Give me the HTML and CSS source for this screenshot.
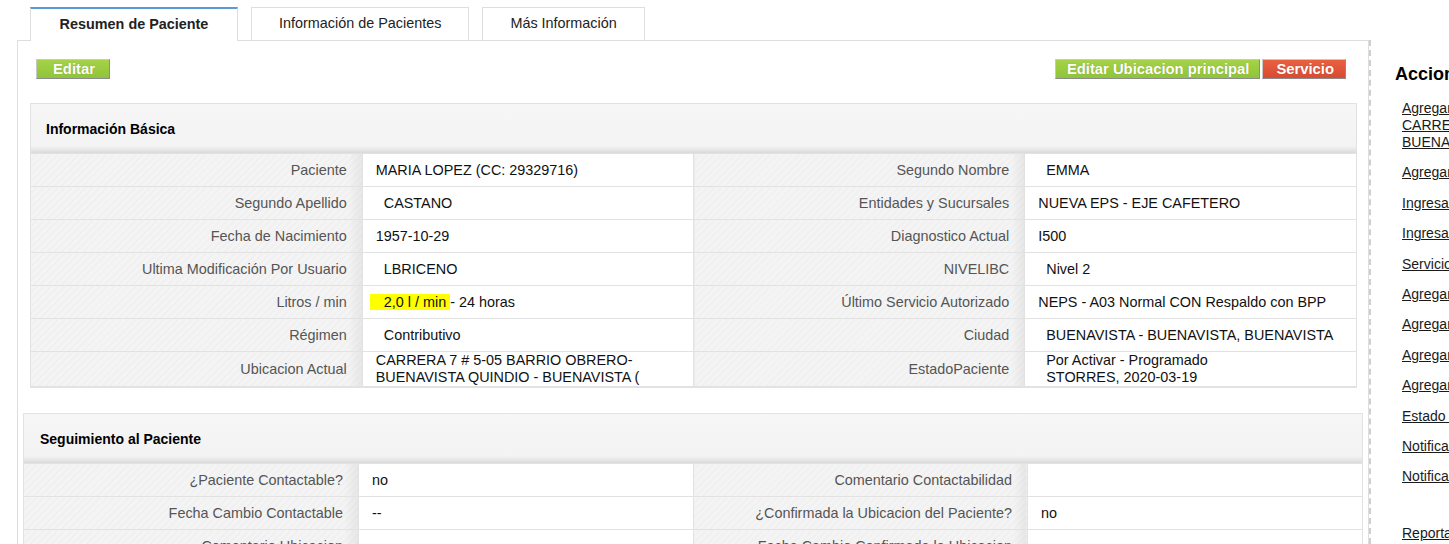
FILE: index.html
```html
<!DOCTYPE html>
<html lang="es">
<head>
    <meta charset="UTF-8">
    <title>Resumen de Paciente</title>
    <link rel="stylesheet" href="styles.css">
</head>
<body>
    <div class="layout">
        <div class="main">
            <!-- pestañas -->
            <ul class="tabs">
                <li class="tab active">Resumen de Paciente</li>
                <li class="tab">Información de Pacientes</li>
                <li class="tab">Más Información</li>
            </ul>

            <div class="panel">
                <div class="toolbar">
                    <a class="btn green">Editar</a>
                    <div class="toolbar-right">
                        <a class="btn green">Editar Ubicacion principal</a>
                        <a class="btn red">Servicio</a>
                    </div>
                </div>

                <div class="box">
                    <div class="box-head">Información Básica</div>
                    <table class="info">
                        <tr>
                            <th>Paciente</th>
                            <td>MARIA LOPEZ (CC: 29329716)</td>
                            <th>Segundo Nombre</th>
                            <td><span class="indent">EMMA</span></td>
                        </tr>
                        <tr>
                            <th>Segundo Apellido</th>
                            <td><span class="indent">CASTANO</span></td>
                            <th>Entidades y Sucursales</th>
                            <td>NUEVA EPS - EJE CAFETERO</td>
                        </tr>
                        <tr>
                            <th>Fecha de Nacimiento</th>
                            <td>1957-10-29</td>
                            <th>Diagnostico Actual</th>
                            <td>I500</td>
                        </tr>
                        <tr>
                            <th>Ultima Modificación Por Usuario</th>
                            <td><span class="indent">LBRICENO</span></td>
                            <th>NIVELIBC</th>
                            <td><span class="indent">Nivel 2</span></td>
                        </tr>
                        <tr>
                            <th>Litros / min</th>
                            <td><span class="mark">2,0 l / min </span>- 24 horas</td>
                            <th>Último Servicio Autorizado</th>
                            <td>NEPS - A03 Normal CON Respaldo con BPP</td>
                        </tr>
                        <tr>
                            <th>Régimen</th>
                            <td><span class="indent">Contributivo</span></td>
                            <th>Ciudad</th>
                            <td><span class="indent">BUENAVISTA - BUENAVISTA, BUENAVISTA</span></td>
                        </tr>
                        <tr class="tall">
                            <th>Ubicacion Actual</th>
                            <td>CARRERA 7 # 5-05 BARRIO OBRERO-<br>BUENAVISTA QUINDIO - BUENAVISTA (</td>
                            <th>EstadoPaciente</th>
                            <td><span class="indent">Por Activar - Programado<br>STORRES, 2020-03-19</span></td>
                        </tr>
                    </table>
                </div>

                <div class="box wide">
                    <div class="box-head">Seguimiento al Paciente</div>
                    <table class="info">
                        <tr>
                            <th>¿Paciente Contactable?</th>
                            <td>no</td>
                            <th>Comentario Contactabilidad</th>
                            <td></td>
                        </tr>
                        <tr>
                            <th>Fecha Cambio Contactable</th>
                            <td>--</td>
                            <th>¿Confirmada la Ubicacion del Paciente?</th>
                            <td>no</td>
                        </tr>
                        <tr>
                            <th>Comentario Ubicacion</th>
                            <td></td>
                            <th>Fecha Cambio Confirmada la Ubicacion</th>
                            <td></td>
                        </tr>
                    </table>
                </div>
            </div>
        </div>

        <div class="sidebar">
            <h3>Acciones</h3>
            <ul class="actions">
                <li><a>Agregar ubicación<br>CARRERA 7 # 5-05<br>BUENAVISTA</a></li>
                <li><a>Agregar Servicio</a></li>
                <li><a>Ingresar Novedad</a></li>
                <li><a>Ingresar Visita</a></li>
                <li><a>Servicio Técnico</a></li>
                <li><a>Agregar Llamada</a></li>
                <li><a>Agregar Comentario</a></li>
                <li><a>Agregar Documento</a></li>
                <li><a>Agregar Equipo</a></li>
                <li><a>Estado del Paciente</a></li>
                <li><a>Notificar Cambio</a></li>
                <li><a>Notificar Retiro</a></li>
                <li class="spaced"><a>Reportar Novedad</a></li>
            </ul>
        </div>
    </div>
</body>
</html>
```

FILE: styles.css
```css
* {
    margin: 0;
    padding: 0;
    box-sizing: border-box;
}

body {
    font-family: "Liberation Sans", Arial, sans-serif;
    font-size: 14.4px;
    color: #000;
    background: #fff;
    overflow: hidden;
    height: 544px;
}

.layout {
    display: flex;
    align-items: flex-start;
}

.main {
    width: 1369px;
    flex-shrink: 0;
    padding: 7px 0 0 17px;
}

/* pestañas */
.tabs {
    list-style: none;
    display: flex;
    gap: 13px;
    margin-left: 13px;
    position: relative;
    z-index: 2;
}

.tab {
    height: 33px;
    line-height: 31px;
    padding: 0 27px;
    border: 1px solid #dedede;
    border-bottom: none;
    background: #fff;
    color: #222;
}

.tab.active {
    border-top: 2px solid #5b9bd5;
    font-weight: bold;
    padding: 0;
    width: 208px;
    text-align: center;
    line-height: 31px;
    height: 34px;
    margin-bottom: -1px;
}

.panel {
    border: 1px solid #dedede;
    border-bottom: none;
    padding: 18px 11px 40px 12px;
    height: 520px;
}

.toolbar {
    display: flex;
    justify-content: space-between;
    padding: 0 11px 0 6px;
    margin-bottom: 24px;
}

.toolbar-right {
    display: flex;
    gap: 2px;
}

.btn {
    display: inline-block;
    height: 20px;
    line-height: 18px;
    padding: 0 14px 0 16px;
    color: #fff;
    font-weight: bold;
    font-size: 14.8px;
    border: 1px solid #c8c8c8;
    border-right-color: #8c8c8c;
    border-bottom-color: #8c8c8c;
    text-shadow: 0 0 1px rgba(0, 0, 0, 0.25);
}

.btn.green {
    background: linear-gradient(#a6d247, #8fc43a);
}

.toolbar-right .btn.green {
    padding: 0 10px 0 11px;
}

.btn.red {
    background: linear-gradient(#e9603f, #d94b33);
    padding: 0 11px 0 13px;
}

/* cajas de información */
.box {
    border: 1px solid #e2e2e2;
    margin-bottom: 25px;
}

.box.wide {
    margin-left: -7px;
    margin-right: -6px;
}

.box-head {
    height: 49px;
    padding: 17px 15px 0;
    font-weight: bold;
    font-size: 14px;
    background: linear-gradient(#f6f6f6 0, #f3f3f3 42px, #e6e6e6 46px, #d9d9d9 49px);
}

.box.wide .box-head {
    padding-left: 16px;
}

.info {
    width: 100%;
    border-collapse: collapse;
    table-layout: fixed;
}

.info th,
.info td {
    height: 33px;
    border: 1px solid #e2e2e2;
    border-top: none;
    font-weight: normal;
    vertical-align: middle;
    line-height: 17px;
}

.info tr:first-child th,
.info tr:first-child td {
    border-top: 1px solid #e2e2e2;
}

.info th {
    text-align: right;
    color: #555;
    padding-right: 15px;
    background:
        linear-gradient(to right, rgba(0, 0, 0, 0) calc(100% - 14px), rgba(0, 0, 0, 0.05)),
        repeating-linear-gradient(135deg, #f4f4f4 0, #f4f4f4 3px, #f0f0f0 3px, #f0f0f0 5px);
}

.info td {
    padding-left: 13px;
    color: #111;
}

.info tr.tall th,
.info tr.tall td {
    height: 35px;
}

.info tr th:first-child {
    border-left: none;
}

.info tr td:last-child {
    border-right: none;
}

.indent {
    padding-left: 8px;
    display: inline-block;
}

.mark {
    background: #ffff00;
    margin-left: -6px;
    padding-left: 14px;
}

/* barra lateral */
.sidebar {
    margin-top: 40px;
    border-left: 2px dashed #cfcfcf;
    padding: 24px 0 0 24px;
    width: 300px;
    flex-shrink: 0;
    height: 504px;
    white-space: nowrap;
}

.sidebar h3 {
    font-size: 18px;
    line-height: 21px;
    font-weight: bold;
}

.actions {
    list-style: none;
    margin-top: 15px;
    padding-left: 7px;
}

.actions li {
    line-height: 17px;
    margin-bottom: 13.4px;
    font-size: 14px;
}

.actions li.spaced {
    margin-top: 40px;
}

.actions a {
    color: #1a1a1a;
    text-decoration: underline;
}
```
